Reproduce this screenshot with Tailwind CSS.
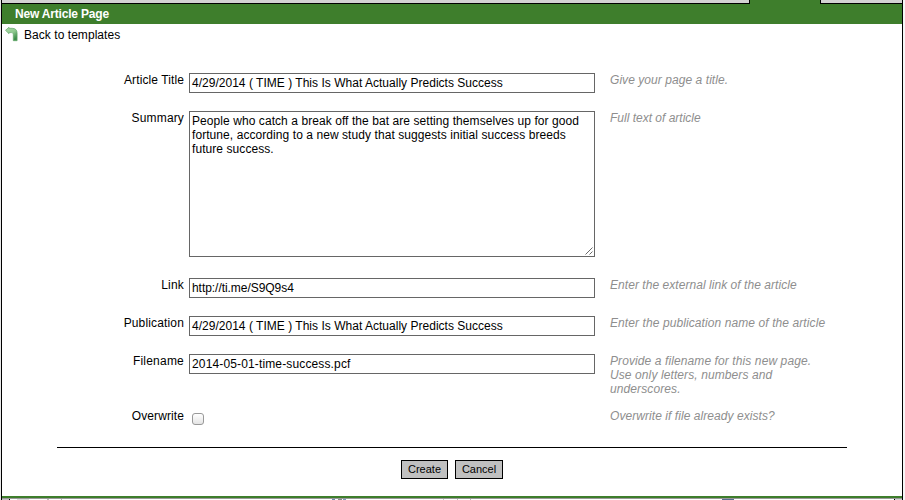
<!DOCTYPE html>
<html lang="en">
<head>
<meta charset="utf-8">
<title>New Article Page</title>
<script src="https://cdn.jsdelivr.net/npm/@tailwindcss/browser@4"></script>
</head>
<body class="w-[905px] h-[500px] overflow-hidden bg-white font-['Liberation_Sans',Arial,sans-serif] text-[12px] leading-[14px] text-black">
<div class="flex h-[500px] w-[905px] bg-[#f7f7f7]">
  <div class="w-px shrink-0 bg-[#e8e8e8]"></div>
  <div class="flex w-[902px] shrink-0 flex-col border-x border-black bg-white">
    <div class="flex h-1 shrink-0 bg-[#3e7e2c]">
      <div class="w-[748px] border-r border-b border-black bg-[#d3d3d3]"></div>
      <div class="w-[70px]"></div>
      <div class="flex-1 border-b border-l border-black bg-[#d3d3d3]"></div>
    </div>
    <header class="h-5 shrink-0 bg-[#3e7e2c] pt-[3px] pl-[13px]"><h1 class="text-[12px] leading-[14px] font-bold tracking-[-0.19px] text-white">New Article Page</h1></header>
    <a class="mt-[3px] flex h-[15px] shrink-0 items-start pl-[3px]">
      <svg class="mr-[6px] block shrink-0" width="13" height="15" viewBox="0 0 13 15">
        <defs><linearGradient id="arrow" x1="0" y1="0" x2=".6" y2="1"><stop offset="0" stop-color="#a9dba6"/><stop offset=".55" stop-color="#90ca90"/><stop offset="1" stop-color="#3c8c4a"/></linearGradient></defs>
        <path d="M.5 3.300 4 .3V1.300h3.200c3.200 0 4.900 1.800 4.900 4.900v7.500H8.300V7.800C8.300 6.200 7.700 5.600 6.300 5.600H4V6.700Z" fill="url(#arrow)" stroke="#62a868" stroke-width=".7"/>
      </svg>
      <span class="pt-px tracking-[0.05px]">Back to templates</span>
    </a>
    <form class="mt-[31px] flex flex-col">
      <div class="flex h-[38px] items-start">
        <label class="mr-[5px] w-[182px] text-right tracking-[0.1px]">Article Title</label>
        <div class="h-5 w-[406px] border border-[#666] pt-[2px] pl-[2px] tracking-[0.02px] whitespace-nowrap">4/29/2014 ( TIME ) This Is What Actually Predicts Success</div>
        <p class="ml-[15px] w-[220px] tracking-[0.06px] text-[#8e8e8e] italic">Give your page a title.</p>
      </div>
      <div class="flex h-[167px] items-start">
        <label class="mr-[5px] w-[182px] text-right tracking-[0.15px]">Summary</label>
        <div class="relative h-[146px] w-[406px] border border-[#666] pt-[2px] pl-[2px] tracking-[0.07px] whitespace-nowrap">People who catch a break off the bat are setting themselves up for good<br>fortune, according to a new study that suggests initial success breeds<br>future success.
          <svg class="absolute right-px bottom-px" width="8" height="8" viewBox="0 0 8 8" stroke="#444" stroke-width=".8"><path d="M.5 7.500l7-7M4.500 7.500l3-3"/></svg>
        </div>
        <p class="ml-[15px] w-[220px] text-[#8e8e8e] italic">Full text of article</p>
      </div>
      <div class="flex h-[38px] items-start">
        <label class="mr-[5px] w-[182px] text-right tracking-[0.2px]">Link</label>
        <div class="h-5 w-[406px] border border-[#666] pt-[2px] pl-[2px] tracking-[-0.05px]">http://ti.me/S9Q9s4</div>
        <p class="ml-[15px] w-[220px] tracking-[0.05px] text-[#8e8e8e] italic">Enter the external link of the article</p>
      </div>
      <div class="flex h-[38px] items-start">
        <label class="mr-[5px] w-[182px] text-right tracking-[0.15px]">Publication</label>
        <div class="h-5 w-[406px] border border-[#666] pt-[2px] pl-[2px] tracking-[0.02px] whitespace-nowrap">4/29/2014 ( TIME ) This Is What Actually Predicts Success</div>
        <p class="ml-[15px] w-[220px] tracking-[0.09px] text-[#8e8e8e] italic">Enter the publication name of the article</p>
      </div>
      <div class="flex h-[55px] items-start">
        <label class="mr-[5px] w-[182px] text-right tracking-[0.22px]">Filename</label>
        <div class="h-5 w-[406px] border border-[#666] pt-[2px] pl-[2px] tracking-[0.14px]">2014-05-01-time-success.pcf</div>
        <p class="ml-[15px] w-[220px] tracking-[0.1px] text-[#8e8e8e] italic">Provide a filename for this new page.<br>Use only letters, numbers and<br>underscores.</p>
      </div>
      <div class="flex h-[38px] items-start">
        <label class="mr-[5px] w-[182px] text-right tracking-[0.1px]">Overwrite</label>
        <div class="h-5 w-[406px] pt-1 pl-[3px]"><div class="h-3 w-3 rounded-[3px] border border-[#999] bg-linear-to-b from-white to-[#e4e4e4]"></div></div>
        <p class="ml-[15px] w-[220px] tracking-[0.06px] text-[#8e8e8e] italic">Overwrite if file already exists?</p>
      </div>
      <div class="ml-[55px] h-px w-[790px] bg-black"></div>
      <div class="mt-3 flex gap-[7px] pl-[399px] text-[11px]">
        <button type="button" class="h-[19px] w-[47px] border border-black bg-[#c0c0c0] leading-[17px]">Create</button>
        <button type="button" class="h-[19px] w-[48px] border border-black bg-[#c0c0c0] leading-[17px]">Cancel</button>
      </div>
    </form>
    <div class="mt-auto h-[2px] shrink-0 bg-[#3e7e2c]"></div>
    <div class="h-px shrink-0 bg-[#999]"></div>
    <div class="flex h-px shrink-0 bg-white">
      <div class="w-[7px] bg-[#c8c0c8]"></div><div class="w-px bg-black"></div>
      <div class="ml-[7px] w-3 bg-[#ddd]"></div><div class="ml-[18px] w-[2px] bg-[#bbb]"></div><div class="ml-3 w-px bg-[#bbb]"></div>
      <div class="ml-[270px] w-[3px] bg-[#6f86b0]"></div><div class="ml-[3px] w-[4px] bg-[#888]"></div><div class="ml-px w-[3px] bg-[#7f98bd]"></div>
      <div class="ml-[97px] w-px bg-[#ccc]"></div><div class="ml-[13px] w-px bg-[#bbb]"></div><div class="ml-[12px] w-px bg-[#bbb]"></div>
      <div class="ml-[251px] w-3 bg-[#5a6b93]"></div>
      <div class="ml-auto w-px bg-black"></div><div class="w-[7px] bg-[#d3d3d3]"></div>
    </div>
  </div>
</div>
</body>
</html>
